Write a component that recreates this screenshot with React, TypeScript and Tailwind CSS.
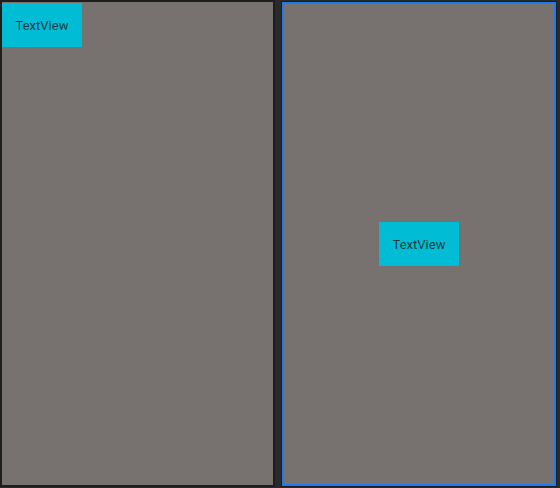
export default function App() {
  return (
    <div className="w-[560px] h-[488px] bg-[#2a2a2a] flex items-start gap-[6px] overflow-hidden" style={{ fontFamily: "Roboto, 'Open Sans', sans-serif" }}>
      <div className="w-[275px] h-[487px] border-2 border-[#1e1e1e] bg-[#77726f] flex items-start justify-start pt-[1px]">
        <div className="w-[80px] h-[44px] bg-[#00bcd4] flex items-center justify-center pt-[2px] text-[13px] text-[#1d3e47]">TextView</div>
      </div>
      <div className="w-[276px] h-[486px] border-[1px] border-[#1e1e1e] mt-[1px]">
        <div className="w-full h-full border-2 border-[#1c7cf0] bg-[#77726f] flex items-center justify-center">
          <div className="w-[80px] h-[44px] bg-[#00bcd4] flex items-center justify-center pt-[1px] text-[13px] text-[#1d3e47]">TextView</div>
        </div>
      </div>
    </div>
  );
}
